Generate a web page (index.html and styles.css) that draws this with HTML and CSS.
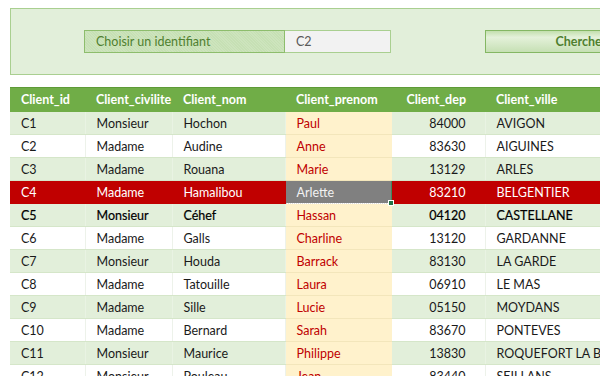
FILE: index.html
```html
<!DOCTYPE html>
<html lang="fr">
<head>
<meta charset="utf-8">
<title>Clients</title>
<link rel="stylesheet" href="styles.css">
</head>
<body>
<div class="page">
  <div class="panel">
    <div class="field-label">Choisir un identifiant</div>
    <div class="field-input">C2</div>
    <div class="spacer"></div>
    <div class="btn">Chercher</div>
  </div>
  <table class="grid">
    <colgroup>
      <col class="c-id"><col class="c-civ"><col class="c-nom"><col class="c-pre"><col class="c-dep"><col class="c-ville">
    </colgroup>
    <thead>
      <tr><th>Client_id</th><th>Client_civilite</th><th>Client_nom</th><th>Client_prenom</th><th>Client_dep</th><th>Client_ville</th></tr>
    </thead>
    <tbody>
      <tr class="odd"><td>C1</td><td>Monsieur</td><td>Hochon</td><td class="pre">Paul</td><td class="num">84000</td><td>AVIGON</td></tr>
      <tr><td>C2</td><td>Madame</td><td>Audine</td><td class="pre">Anne</td><td class="num">83630</td><td>AIGUINES</td></tr>
      <tr class="odd"><td>C3</td><td>Madame</td><td>Rouana</td><td class="pre">Marie</td><td class="num">13129</td><td>ARLES</td></tr>
      <tr class="hit"><td>C4</td><td>Madame</td><td>Hamalibou</td><td class="pre sel">Arlette<span class="handle"></span></td><td class="num">83210</td><td>BELGENTIER</td></tr>
      <tr class="odd strong"><td>C5</td><td>Monsieur</td><td>Céhef</td><td class="pre">Hassan</td><td class="num">04120</td><td>CASTELLANE</td></tr>
      <tr><td>C6</td><td>Madame</td><td>Galls</td><td class="pre">Charline</td><td class="num">13120</td><td>GARDANNE</td></tr>
      <tr class="odd"><td>C7</td><td>Monsieur</td><td>Houda</td><td class="pre">Barrack</td><td class="num">83130</td><td>LA GARDE</td></tr>
      <tr><td>C8</td><td>Madame</td><td>Tatouille</td><td class="pre">Laura</td><td class="num">06910</td><td>LE MAS</td></tr>
      <tr class="odd"><td>C9</td><td>Madame</td><td>Sille</td><td class="pre">Lucie</td><td class="num">05150</td><td>MOYDANS</td></tr>
      <tr><td>C10</td><td>Madame</td><td>Bernard</td><td class="pre">Sarah</td><td class="num">83670</td><td>PONTEVES</td></tr>
      <tr class="odd"><td>C11</td><td>Monsieur</td><td>Maurice</td><td class="pre">Philippe</td><td class="num">13830</td><td>ROQUEFORT LA BEDOULE</td></tr>
      <tr><td>C12</td><td>Monsieur</td><td>Pouleau</td><td class="pre">Jean</td><td class="num">83440</td><td>SEILLANS</td></tr>
    </tbody>
  </table>
</div>
</body>
</html>
```

FILE: styles.css
```css
html, body {
  margin: 0;
  padding: 0;
  background: #ffffff;
  overflow: hidden;
}
body {
  font-family: Lato, "Open Sans", sans-serif;
  font-size: 12.5px;
  color: #1a1a1a;
}
.page {
  width: 600px;
  height: 376px;
  overflow: hidden;
  padding: 8px 0 0 10px;
  box-sizing: border-box;
}
.panel {
  width: 640px;
  height: 67px;
  box-sizing: border-box;
  border: 1px solid #a9cf90;
  background: #e2efda;
  display: flex;
  align-items: center;
  padding-left: 73px;
}
.panel > div {
  flex-shrink: 0;
}
.field-label {
  width: 201px;
  height: 23px;
  box-sizing: border-box;
  border: 1px solid #8dbd6c;
  background-color: #c6e0b4;
  background-image: repeating-linear-gradient(45deg, rgba(255,255,255,0.12) 0 1px, transparent 1px 2px);
  color: #4f7f2f;
  display: flex;
  align-items: center;
  padding-left: 11px;
}
.field-input {
  width: 106px;
  height: 23px;
  box-sizing: border-box;
  border: 1px solid #a9cf90;
  border-left: none;
  background: #f2f2f2;
  color: #595959;
  display: flex;
  align-items: center;
  padding-left: 11px;
}
.spacer {
  width: 94px;
}
.btn {
  width: 192px;
  height: 23px;
  box-sizing: border-box;
  border: 1px solid #84b763;
  background: linear-gradient(#c3dfae 0%, #e4f1da 30%, #c6e0b4 100%);
  color: #4f7f2f;
  font-weight: bold;
  display: flex;
  align-items: center;
  justify-content: center;
}
.grid {
  margin-top: 12px;
  border-collapse: collapse;
  table-layout: fixed;
  width: 640px;
}
.c-id { width: 75px; }
.c-civ { width: 87px; }
.c-nom { width: 113px; }
.c-pre { width: 106px; }
.c-dep { width: 94px; }
.c-ville { width: 165px; }
.grid th {
  background: #70ad47;
  color: #ffffff;
  font-weight: bold;
  text-align: left;
  height: 24px;
  padding: 0 0 0 11px;
  box-sizing: border-box;
  border-top: 1px solid #5e9a37;
}
.grid th:nth-child(5) {
  text-align: right;
  padding: 0 19px 0 0;
}
.grid td {
  height: 23px;
  box-sizing: border-box;
  padding: 1px 0 0 11px;
  white-space: nowrap;
  overflow: hidden;
  border-bottom: 1px solid #d5e6c9;
  border-right: 1px solid #edf2ea;
  background: #ffffff;
}
.grid tr.odd td {
  background: #e2efda;
  border-right-color: #e9f3e3;
}
.grid td.num {
  text-align: right;
  padding: 1px 19px 0 0;
}
.grid td.pre,
.grid tr.odd td.pre {
  background: #fff2cc;
  color: #c00000;
  border-bottom-color: #f3e6bb;
  border-right-color: #fff2cc;
}
.grid tr.hit td {
  background: #c00000;
  color: #ffffff;
  border-bottom-color: #c00000;
  border-right-color: #c00000;
}
.grid tr.hit td.sel {
  background: #808080;
  color: #f2f2f2;
  border: 1px solid #3f8a5a;
  border-bottom: 1px dotted #dcdcdc;
  position: relative;
  overflow: visible;
}
.handle {
  position: absolute;
  right: -3px;
  bottom: -3px;
  width: 4px;
  height: 4px;
  background: #217346;
  border: 1px solid #ffffff;
}
.grid tr.strong td {
  color: #000000;
  -webkit-text-stroke: 0.2px #000000;
}
.grid tr.strong td.pre {
  color: #c00000;
  -webkit-text-stroke: 0;
}
```
